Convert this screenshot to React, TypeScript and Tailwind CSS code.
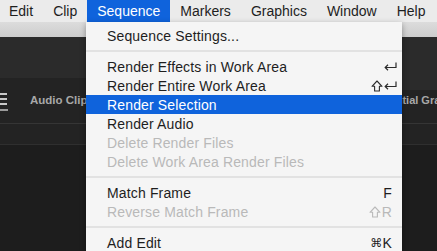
import type { ReactNode } from "react";

const font = { fontFamily: '"Liberation Sans", Arial, sans-serif' };

function ReturnKey({ color = "#2b2b2b" }: { color?: string }) {
  return (
    <svg width="13" height="9" viewBox="0 0 13 9" fill="none" stroke={color} strokeWidth="1.2">
      <path d="M12 0.5 V5.5 H1.5" />
      <path d="M4 2.8 L1.2 5.5 L4 8.2" />
    </svg>
  );
}

function ShiftKey({ color = "#2b2b2b" }: { color?: string }) {
  return (
    <svg width="12" height="12" viewBox="0 0 12 12" fill="none" stroke={color} strokeWidth="1.1">
      <path d="M6 1 L11 6.3 H8.4 V11 H3.6 V6.3 H1 Z" strokeLinejoin="round" />
    </svg>
  );
}

type Item = {
  label: string;
  disabled?: boolean;
  active?: boolean;
  shortcut?: ReactNode;
};

function Row({ label, disabled, active, shortcut }: Item) {
  return (
    <div
      className={`flex h-[19px] items-center pl-[21px] pr-[10px] text-[14px] leading-none tracking-[0.15px] ${
        active ? "bg-[#0f63dc] text-white" : disabled ? "text-[#b9b9b9]" : "text-[#1e1e1e]"
      }`}
    >
      <span>{label}</span>
      {shortcut && <span className="ml-auto flex items-center">{shortcut}</span>}
    </div>
  );
}

function Sep() {
  return (
    <div className="flex h-[12px] items-center">
      <div className="h-[2px] w-full bg-[#e2e2e2]" />
    </div>
  );
}

const menus = ["Edit", "Clip", "Sequence", "Markers", "Graphics", "Window", "Help"];

export default function App() {
  return (
    <div className="relative h-[251px] w-[437px] overflow-hidden bg-[#1d1d1d]" style={font}>
      {/* menubar */}
      <div className="flex h-[22px] items-center bg-[#ebebeb] text-[14px] text-[#1e1e1e]">
        {menus.map((m, i) => (
          <div
            key={m}
            className={`flex h-full items-center px-[10px] ${i === 0 ? "ml-[-1px]" : ""} ${
              m === "Sequence" ? "bg-[#0f63dc] text-white" : ""
            }`}
          >
            {m}
          </div>
        ))}
      </div>

      {/* window title strip */}
      <div className="h-[15px] bg-gradient-to-b from-[#dcdcdc] to-[#cdcdcd]" />

      {/* panel area */}
      <div className="flex h-[87px] border-b border-[#353535]">
        <div className="flex w-[86px] flex-col overflow-hidden">
          <div className="h-[41px] bg-[#2b2b2b]" />
          <div className="flex flex-1 items-start bg-[#232323] pt-[15px]">
            <div className="flex w-[8px] shrink-0 flex-col gap-[3.5px]">
              <div className="h-[1.5px] w-[7px] bg-[#c8c8c8]" />
              <div className="h-[1.5px] w-[7px] bg-[#c8c8c8]" />
              <div className="h-[1.5px] w-[7px] bg-[#c8c8c8]" />
              <div className="mt-[1px] h-[1.5px] w-[8px] bg-[#9a9a9a]" />
            </div>
            <span className="ml-[22px] mt-[-1px] whitespace-nowrap text-[11.5px] font-semibold text-[#a8a8a8]">
              Audio Clip Mixer
            </span>
          </div>
        </div>
        <div className="flex flex-1 flex-col overflow-hidden">
          <div className="h-[53px] bg-[#2b2b2b]" />
          <div className="flex flex-1 items-start bg-[#232323]">
            <span className="ml-[284px] mt-[2px] whitespace-nowrap text-[11px] font-semibold text-[#a8a8a8]">
              Essential Graphics
            </span>
          </div>
        </div>
      </div>
      <div className="h-[21px] border-b border-[#2f2f2f] bg-[#232323]" />

      {/* dropdown */}
      <div className="absolute left-[86px] top-[22px] w-[316px] bg-[#f5f5f5] pt-[4px] shadow-[0_2px_6px_rgba(0,0,0,0.35)]">
        <Row label="Sequence Settings..." />
        <Sep />
        <Row label="Render Effects in Work Area" shortcut={<span className="mr-[-5px]"><ReturnKey /></span>} />
        <Row
          label="Render Entire Work Area"
          shortcut={
            <span className="mr-[-5px] flex items-center gap-[1px]">
              <ShiftKey />
              <ReturnKey />
            </span>
          }
        />
        <Row label="Render Selection" active />
        <Row label="Render Audio" />
        <Row label="Delete Render Files" disabled />
        <Row label="Delete Work Area Render Files" disabled />
        <Sep />
        <Row label="Match Frame" shortcut="F" />
        <Row
          label="Reverse Match Frame"
          disabled
          shortcut={
            <span className="flex items-center gap-[1px]">
              <ShiftKey color="#b9b9b9" />
              <span>R</span>
            </span>
          }
        />
        <Sep />
        <Row
          label="Add Edit"
          shortcut={
            <span className="flex items-center">
              <span style={{ fontFamily: '"DejaVu Sans", sans-serif' }} className="text-[12px]">
                ⌘
              </span>
              <span>K</span>
            </span>
          }
        />
      </div>
    </div>
  );
}
